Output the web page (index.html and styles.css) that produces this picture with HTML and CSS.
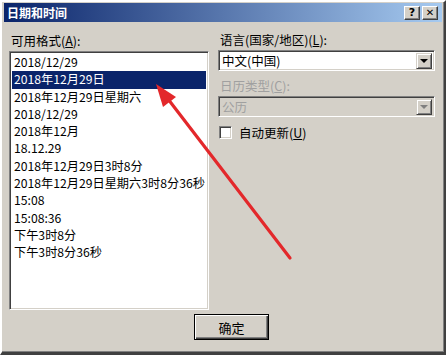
FILE: index.html
```html
<!DOCTYPE html>
<html lang="zh-CN">
<head>
    <meta charset="UTF-8">
    <title>日期和时间</title>
    <link rel="stylesheet" href="styles.css">
</head>
<body>
    <div class="window">
        <div class="titlebar">
            <span class="title">日期和时间</span>
            <div class="title-buttons">
                <button class="cap-btn">?</button>
                <button class="cap-btn close">✕</button>
            </div>
        </div>

        <div class="content">
            <div class="left-col">
                <label class="lbl">可用格式(<u>A</u>):</label>
                <ul class="listbox">
                    <li>2018/12/29</li>
                    <li class="selected">2018年12月29日</li>
                    <li>2018年12月29日星期六</li>
                    <li>2018/12/29</li>
                    <li>2018年12月</li>
                    <li>18.12.29</li>
                    <li>2018年12月29日3时8分</li>
                    <li>2018年12月29日星期六3时8分36秒</li>
                    <li>15:08</li>
                    <li>15:08:36</li>
                    <li>下午3时8分</li>
                    <li>下午3时8分36秒</li>
                </ul>
            </div>

            <div class="right-col">
                <label class="lbl">语言(国家/地区)(<u>L</u>):</label>
                <div class="combo">
                    <span class="combo-text">中文(中国)</span>
                    <span class="combo-btn"><span class="tri"></span></span>
                </div>

                <label class="lbl disabled">日历类型(<u>C</u>):</label>
                <div class="combo disabled">
                    <span class="combo-text">公历</span>
                    <span class="combo-btn"><span class="tri"></span></span>
                </div>

                <div class="check-row">
                    <span class="checkbox"></span>
                    <span>自动更新(<u>U</u>)</span>
                </div>
            </div>
        </div>

        <div class="footer">
            <button class="ok-btn">确定</button>
        </div>

        <!-- red annotation arrow drawn over the dialog -->
        <svg class="arrow" width="446" height="355" viewBox="0 0 446 355">
            <line x1="290" y1="258" x2="168" y2="99" stroke="#e3282b" stroke-width="3.2" stroke-linecap="round"/>
            <polygon points="156,84 176,97 163,107" fill="#e3282b"/>
        </svg>
    </div>
</body>
</html>
```

FILE: styles.css
```css
* {
    margin: 0;
    padding: 0;
    box-sizing: border-box;
}

body {
    font-family: "Noto Sans CJK SC", "Noto Sans", sans-serif;
    font-size: 12.5px;
    background: #ffffff;
}

.window {
    position: relative;
    width: 446px;
    height: 355px;
    background: #d4d0c8;
    border-top: 2px solid #ffffff;
    border-left: 2px solid #ffffff;
    border-right: 2px solid #404040;
    border-bottom: 3px solid #404040;
    box-shadow: inset -1px -1px #808080;
    padding: 1px 2px 0 2px;
}

.titlebar {
    height: 19px;
    background: linear-gradient(to right, #0a246a, #a6caf0);
    display: flex;
    align-items: center;
    justify-content: space-between;
    padding: 0 4px 0 3px;
}

.title {
    color: #ffffff;
    font-weight: bold;
    font-size: 12px;
    line-height: 18px;
}

.title-buttons {
    display: flex;
    gap: 2px;
}

.cap-btn {
    width: 16px;
    height: 14px;
    background: #d4d0c8;
    border: 1px solid;
    border-color: #ffffff #404040 #404040 #ffffff;
    box-shadow: inset -1px -1px #808080;
    font-family: "DejaVu Sans", sans-serif;
    font-weight: bold;
    font-size: 11px;
    line-height: 11px;
    color: #000000;
    display: flex;
    align-items: center;
    justify-content: center;
}

.cap-btn.close {
    font-size: 10px;
}

.content {
    display: grid;
    grid-template-columns: 200px 217px;
    column-gap: 9px;
    padding: 10px 0 0 5px;
}

.lbl {
    display: block;
    color: #000000;
    line-height: 18px;
    padding-left: 2px;
}

.lbl.disabled {
    color: #a0a0a0;
}

.listbox {
    list-style: none;
    margin-top: 1px;
    height: 259px;
    background: #ffffff;
    border: 1px solid;
    border-color: #808080 #ffffff #ffffff #808080;
    box-shadow: inset 1px 1px #404040, inset -1px -1px #d4d0c8;
    padding: 2px 2px;
    font-size: 12.2px;
}

.listbox li {
    height: 17.3px;
    line-height: 17.3px;
    padding-left: 2px;
    color: #000000;
    white-space: nowrap;
}

.listbox li.selected {
    background: #0a246a;
    color: #ffffff;
}

.right-col {
    margin-top: -1px;
}

.combo {
    display: flex;
    align-items: center;
    justify-content: space-between;
    height: 21px;
    margin: 1px 0 6px 0;
    background: #ffffff;
    border: 1px solid;
    border-color: #808080 #ffffff #ffffff #808080;
    box-shadow: inset 1px 1px #404040, inset -1px -1px #d4d0c8;
    padding: 2px 2px 2px 3px;
}

.combo.disabled {
    background: #d4d0c8;
    color: #a0a0a0;
}

.combo-text {
    line-height: 16px;
}

.combo-btn {
    width: 16px;
    height: 16px;
    background: #d4d0c8;
    border: 1px solid;
    border-color: #d4d0c8 #404040 #404040 #d4d0c8;
    box-shadow: inset 1px 1px #ffffff, inset -1px -1px #808080;
    display: flex;
    align-items: center;
    justify-content: center;
}

.tri {
    width: 0;
    height: 0;
    border-left: 4px solid transparent;
    border-right: 4px solid transparent;
    border-top: 4px solid #000000;
}

.combo.disabled .tri {
    border-top-color: #808080;
}

.check-row {
    display: flex;
    align-items: center;
    gap: 7px;
    margin-top: 3px;
    padding-left: 1px;
}

.checkbox {
    width: 13px;
    height: 13px;
    background: #ffffff;
    border: 1px solid;
    border-color: #808080 #ffffff #ffffff #808080;
    box-shadow: inset 1px 1px #404040, inset -1px -1px #d4d0c8;
}

.footer {
    display: flex;
    padding: 4px 0 0 190px;
}

.ok-btn {
    width: 75px;
    height: 26px;
    background: #d4d0c8;
    border: 1px solid #000000;
    box-shadow: inset 1px 1px #ffffff, inset -1px -1px #404040, inset -2px -2px #808080;
    font-family: "Noto Sans CJK SC", sans-serif;
    font-size: 13px;
    color: #000000;
}

.arrow {
    position: absolute;
    left: -2px;
    top: -2px;
    pointer-events: none;
}
```
